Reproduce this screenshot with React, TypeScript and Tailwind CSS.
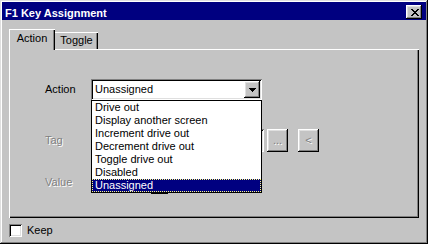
import React from "react";

// classic 3D edges
const raised =
  "shadow-[inset_-1px_-1px_#000,inset_1px_1px_#fff,inset_-2px_-2px_#808080,inset_2px_2px_#dfdfdf]";
const sunken =
  "shadow-[inset_1px_1px_#808080,inset_-1px_-1px_#fff,inset_2px_2px_#000,inset_-2px_-2px_#dfdfdf]";
const dimText = "text-[#808080] [text-shadow:1px_1px_0_#fff]";

const actions = [
  "Drive out",
  "Display another screen",
  "Increment drive out",
  "Decrement drive out",
  "Toggle drive out",
  "Disabled",
  "Unassigned",
];

function CloseGlyph() {
  const px = [
    [0, 0], [1, 0], [6, 0], [7, 0],
    [1, 1], [2, 1], [5, 1], [6, 1],
    [2, 2], [3, 2], [4, 2], [5, 2],
    [3, 3], [4, 3],
    [2, 4], [3, 4], [4, 4], [5, 4],
    [1, 5], [2, 5], [5, 5], [6, 5],
    [0, 6], [1, 6], [6, 6], [7, 6],
  ];
  return (
    <svg width="8" height="7" viewBox="0 0 8 7" shapeRendering="crispEdges">
      {px.map(([x, y]) => (
        <rect key={`${x}-${y}`} x={x} y={y} width="1" height="1" fill="#000" />
      ))}
    </svg>
  );
}

function DownArrow() {
  return (
    <svg width="7" height="4" viewBox="0 0 7 4" shapeRendering="crispEdges">
      <rect x="0" y="0" width="7" height="1" fill="#000" />
      <rect x="1" y="1" width="5" height="1" fill="#000" />
      <rect x="2" y="2" width="3" height="1" fill="#000" />
      <rect x="3" y="3" width="1" height="1" fill="#000" />
    </svg>
  );
}

export default function App() {
  return (
    <div
      className="w-[428px] h-[244px] bg-[#c4c4c4] p-[2px] text-[11px] leading-[13px] text-black shadow-[inset_-1px_-1px_#000,inset_1px_1px_#dfdfdf,inset_-2px_-2px_#808080,inset_2px_2px_#fff]"
      style={{ fontFamily: "'Liberation Sans', Arial, sans-serif" }}
    >
      {/* title bar */}
      <div className="h-[18px] bg-[#000080] flex items-start pl-[3px] pr-[4px]">
        <span className="mt-[5px] font-bold text-white">F1 Key Assignment</span>
        <div className={`ml-auto mt-[3px] w-[16px] h-[14px] bg-[#c4c4c4] flex items-center justify-center pl-[1px] ${raised}`}>
          <CloseGlyph />
        </div>
      </div>

      <div className="px-[7px]">
        {/* tabs */}
        <div className="mt-[9px] h-[20px] flex items-end">
          <div className="relative z-10 -mb-px w-[46px] h-[21px] bg-[#c4c4c4] pt-[3px] text-center shadow-[inset_1px_1px_#fff,inset_-1px_0_#000,inset_-2px_0_#808080]">
            Action
          </div>
          <div className="w-[43px] h-[17px] pt-[2px] text-center shadow-[inset_0_1px_#fff,inset_-1px_0_#000,inset_-2px_0_#808080]">
            Toggle
          </div>
        </div>

        {/* tab body */}
        <div className="relative w-[410px] h-[169px] pl-[36px] pt-[30px] shadow-[inset_1px_1px_#fff,inset_-1px_-1px_#000,inset_-2px_-2px_#808080]">
          <div className="flex items-center h-[21px]">
            <span className="w-[46px]">Action</span>
            <div className={`relative w-[171px] h-[21px] bg-white flex items-center pl-[4px] ${sunken}`}>
              Unassigned
              <div className={`absolute right-[2px] top-[2px] w-[16px] h-[17px] bg-[#c4c4c4] flex items-center justify-center ${raised}`}>
                <DownArrow />
              </div>
            </div>
          </div>

          <div className="flex items-center h-[23px] mt-[29px]">
            <span className={`w-[46px] ${dimText}`}>Tag</span>
            <div className={`w-[173px] h-[23px] ${sunken}`} />
            <div className={`ml-[3px] w-[21px] h-[23px] flex items-center justify-center ${raised} ${dimText}`}>
              ...
            </div>
            <div className={`ml-[10px] w-[21px] h-[23px] flex items-center justify-center ${raised} ${dimText}`}>
              &lt;
            </div>
          </div>

          <div className="flex items-center h-[23px] mt-[19px]">
            <span className={`w-[46px] ${dimText}`}>Value</span>
            <div className={`ml-[60px] w-[17px] h-[23px] ${raised}`} />
          </div>

          {/* open drop-down list */}
          <ul className="absolute left-[82px] top-[51px] w-[171px] h-[93px] bg-white border border-black z-20">
            {actions.map((a) => (
              <li
                key={a}
                className={
                  a === "Unassigned"
                    ? "h-[13px] flex items-center pl-[3px] bg-[#000080] text-white outline-1 outline-dotted outline-[#ffff80] -outline-offset-1"
                    : "h-[13px] flex items-center pl-[3px]"
                }
              >
                {a}
              </li>
            ))}
          </ul>
        </div>

        {/* keep checkbox */}
        <div className="mt-[6px] flex items-center">
          <div className={`w-[13px] h-[13px] bg-white ${sunken}`} />
          <span className="ml-[5px]">Keep</span>
        </div>
      </div>
    </div>
  );
}
